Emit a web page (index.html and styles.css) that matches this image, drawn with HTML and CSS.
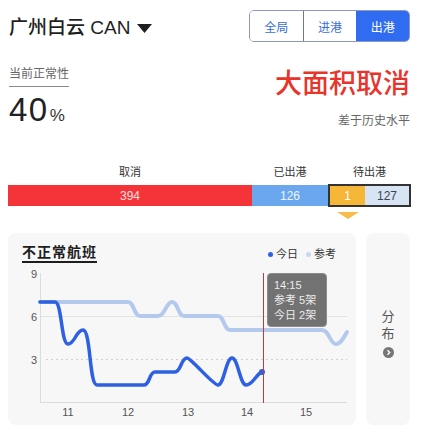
FILE: index.html
```html
<!DOCTYPE html>
<html lang="zh-CN">
<head>
<meta charset="utf-8">
<title>广州白云 CAN</title>
<link rel="stylesheet" href="styles.css">
</head>
<body>
<div class="page">
  <header class="top">
    <div class="airport">广州白云 CAN<svg class="caret" width="15" height="9" viewBox="0 0 15 9"><polygon points="0,0 15,0 7.5,9" fill="#1f1f1f"/></svg></div>
    <div class="seg">
      <span class="seg-item seg-first">全局</span>
      <span class="seg-item">进港</span>
      <span class="seg-item seg-active">出港</span>
    </div>
  </header>

  <section class="stats">
    <div class="stat-left">
      <div class="stat-label">当前正常性</div>
      <div class="stat-value"><span class="num">40</span><span class="pct">%</span></div>
    </div>
    <div class="stat-right">
      <div class="alert">大面积取消</div>
      <div class="alert-sub">差于历史水平</div>
    </div>
  </section>

  <section class="flow">
    <div class="flow-labels">
      <span class="flow-label" style="width:244px">取消</span>
      <span class="flow-label" style="width:76px">已出港</span>
      <span class="flow-label" style="width:83px">待出港</span>
    </div>
    <div class="flow-bar">
      <div class="bar bar-cancel" style="width:244px">394</div>
      <div class="bar bar-out" style="width:76px">126</div>
      <div class="pending">
        <div class="bar bar-ready" style="width:35px">1<span class="pointer"></span></div>
        <div class="bar bar-wait" style="width:44px">127</div>
      </div>
    </div>
  </section>

  <section class="cards">
    <div class="card chart-card">
      <div class="card-head">
        <span class="card-title">不正常航班</span>
        <span class="legend"><i class="dot dot-today"></i>今日<i class="dot dot-ref"></i>参考</span>
      </div>
      <svg class="chart" width="348" height="155" viewBox="0 0 348 155">
        <line x1="32" y1="51.5" x2="339" y2="51.5" class="grid"/>
        <line x1="38" y1="94.5" x2="339" y2="94.5" class="grid-dash"/>
        <line x1="32.5" y1="8" x2="32.5" y2="137" class="axis"/>
        <line x1="32" y1="137.5" x2="339" y2="137.5" class="axis"/>
        <text x="26" y="13" class="tick">9</text>
        <text x="26" y="56" class="tick">6</text>
        <text x="26" y="99" class="tick">3</text>
        <text x="60" y="151" class="tick">11</text>
        <text x="120" y="151" class="tick">12</text>
        <text x="180" y="151" class="tick">13</text>
        <text x="239" y="151" class="tick">14</text>
        <text x="298" y="151" class="tick">15</text>
        <path class="line-ref" d="M32,37 L120,37 C126,37 126,51 132,51 L150,51 C157,51 158,37 164,37 C170,37 170,51 176,51 L210,51 C216,51 216,65 222,65 L314,65 C321,65 322,79 328,79 C333,79 336,72 339,67"/>
        <path class="line-today" d="M32,37 L47,37 C54,37 53,79 60,79 C67,79 68,65 75,65 C83,65 81,120 89,120 L136,120 C142,120 141,107 147,107 L167,107 C173,107 173,93 179,93 C183,93 205,120 210,120 C216,120 218,93 224,93 C230,93 232,120 238,120 C245,120 248,109 254,107"/>
        <circle cx="254" cy="107" r="3" class="end-dot"/>
        <line x1="255.5" y1="8" x2="255.5" y2="138" class="cursor"/>
      </svg>
      <div class="tooltip">
        <div>14:15</div>
        <div>参考 5架</div>
        <div>今日 2架</div>
      </div>
    </div>
    <div class="card side-card">
      <span class="side-text">分</span>
      <span class="side-text">布</span>
      <span class="side-icon"><svg width="11" height="11" viewBox="0 0 11 11"><circle cx="5.5" cy="5.5" r="5.5" fill="#767676"/><polyline points="4.5,3.3 6.7,5.5 4.5,7.7" fill="none" stroke="#fff" stroke-width="1.4"/></svg></span>
    </div>
  </section>
</div>
</body>
</html>
```

FILE: styles.css
```css
* { box-sizing: border-box; }
html, body { margin: 0; padding: 0; background: #fff; }
body {
  font-family: "Liberation Sans", "Noto Sans CJK SC", sans-serif;
  color: #222;
}
.page {
  width: 421px;
  padding: 10px 10px 0 8px;
}

/* header */
.top {
  display: flex;
  justify-content: space-between;
  align-items: center;
  height: 32px;
}
.airport {
  display: flex;
  align-items: center;
  font-size: 19px;
  line-height: 24px;
  padding-top: 4px;
  padding-left: 1px;
  color: #1f1f1f;
  font-weight: 500;
}
.caret { margin-left: 7px; }
.seg {
  display: flex;
  width: 161px;
  height: 32px;
  border: 1px solid #8e97c9;
  border-radius: 5px;
  overflow: hidden;
  margin-right: 1px;
}
.seg-item {
  flex: 1;
  display: flex;
  align-items: center;
  justify-content: center;
  font-size: 12px;
  color: #3b6fd6;
  background: #fff;
}
.seg-first { border-right: 1px solid #6a75b0; }
.seg-active { background: #2f6cf1; color: #fff; }

/* stats */
.stats {
  display: flex;
  justify-content: space-between;
  margin-top: 22px;
}
.stat-left { padding-left: 1px; }
.stat-label {
  display: inline-block;
  font-size: 12px;
  line-height: 16px;
  margin-top: 1px;
  color: #666;
  padding-bottom: 4px;
  border-bottom: 1px solid #8a8a8a;
}
.stat-value {
  margin-top: 5px;
  line-height: 36px;
  color: #222;
}
.num { font-size: 33px; letter-spacing: 1.5px; }
.pct { font-size: 17px; margin-left: 1px; color: #333; }
.stat-right {
  display: flex;
  flex-direction: column;
  align-items: flex-end;
  padding-right: 1px;
}
.alert {
  font-size: 27px;
  line-height: 36px;
  font-weight: 500;
  color: #e8342b;
  font-family: "Noto Sans CJK SC", sans-serif;
}
.alert-sub {
  margin-top: 13px;
  font-size: 12px;
  line-height: 16px;
  color: #666;
}

/* flow bar */
.flow { margin-top: 31px; }
.flow-labels {
  display: flex;
  margin-bottom: 5px;
}
.flow-label {
  text-align: center;
  font-size: 11px;
  line-height: 14px;
  color: #333;
}
.flow-bar {
  display: flex;
  align-items: center;
  height: 23px;
}
.bar {
  height: 21px;
  display: flex;
  align-items: center;
  justify-content: center;
  font-size: 12px;
}
.bar-cancel { background: #f5343a; color: #fde0e0; }
.bar-out { background: #6ba7ef; color: #eef5ff; }
.pending {
  display: flex;
  border: 2px solid #333;
  height: 23px;
}
.pending .bar { height: 19px; }
.bar-ready {
  position: relative;
  background: #f6b637;
  color: #fff;
}
.bar-wait { background: #d6e4f4; color: #3d4450; }
.pointer {
  position: absolute;
  top: 26px;
  left: 50%;
  transform: translateX(-50%);
  width: 0;
  height: 0;
  border-left: 11px solid transparent;
  border-right: 11px solid transparent;
  border-top: 7px solid #f7bd4a;
}

/* cards */
.cards {
  display: flex;
  gap: 10px;
  margin-top: 26px;
}
.card {
  background: #f7f7f7;
  border-radius: 8px;
  height: 192px;
}
.chart-card {
  position: relative;
  width: 348px;
}
.card-head {
  display: flex;
  justify-content: space-between;
  align-items: flex-start;
  height: 32px;
  padding: 10px 20px 0 14px;
}
.card-title {
  font-size: 14px;
  font-weight: 700;
  line-height: 18px;
  letter-spacing: 1px;
  color: #1e1e1e;
  border-bottom: 2px solid #1e1e1e;
}
.legend {
  display: flex;
  align-items: center;
  font-size: 11px;
  line-height: 18px;
  color: #333;
  padding-top: 2px;
}
.dot {
  display: inline-block;
  width: 5px;
  height: 5px;
  border-radius: 50%;
  margin-right: 3px;
}
.dot-today { background: #2e5fe0; }
.dot-ref { background: #c9d7ee; margin-left: 8px; }
.chart { display: block; }
.grid { stroke: #e3e3e3; stroke-width: 1; }
.grid-dash { stroke: #cfcfcf; stroke-width: 1; stroke-dasharray: 2 3; }
.axis { stroke: #dcdcdc; stroke-width: 1; }
.tick {
  font-family: "Liberation Sans", sans-serif;
  font-size: 11px;
  fill: #555;
  text-anchor: middle;
}
.line-ref {
  fill: none;
  stroke: #b4caed;
  stroke-width: 4;
  stroke-linejoin: round;
  stroke-linecap: round;
}
.line-today {
  fill: none;
  stroke: #2e60e2;
  stroke-width: 3.5;
  stroke-linejoin: round;
  stroke-linecap: round;
}
.end-dot { fill: #2e60e2; }
.cursor { stroke: #c43a3a; stroke-width: 1; }
.tooltip {
  position: absolute;
  left: 259px;
  top: 40px;
  width: 60px;
  height: 54px;
  padding: 4px 0 0 6px;
  background: #727272;
  border: 1px solid #8c8c8c;
  border-radius: 4px;
  color: #ececec;
  font-size: 11px;
  line-height: 15px;
}
.side-card {
  width: 44px;
  display: flex;
  flex-direction: column;
  align-items: center;
  padding-top: 75px;
}
.side-text {
  font-size: 13px;
  line-height: 17px;
  color: #555;
}
.side-icon {
  display: flex;
  margin-top: 5px;
}
```
